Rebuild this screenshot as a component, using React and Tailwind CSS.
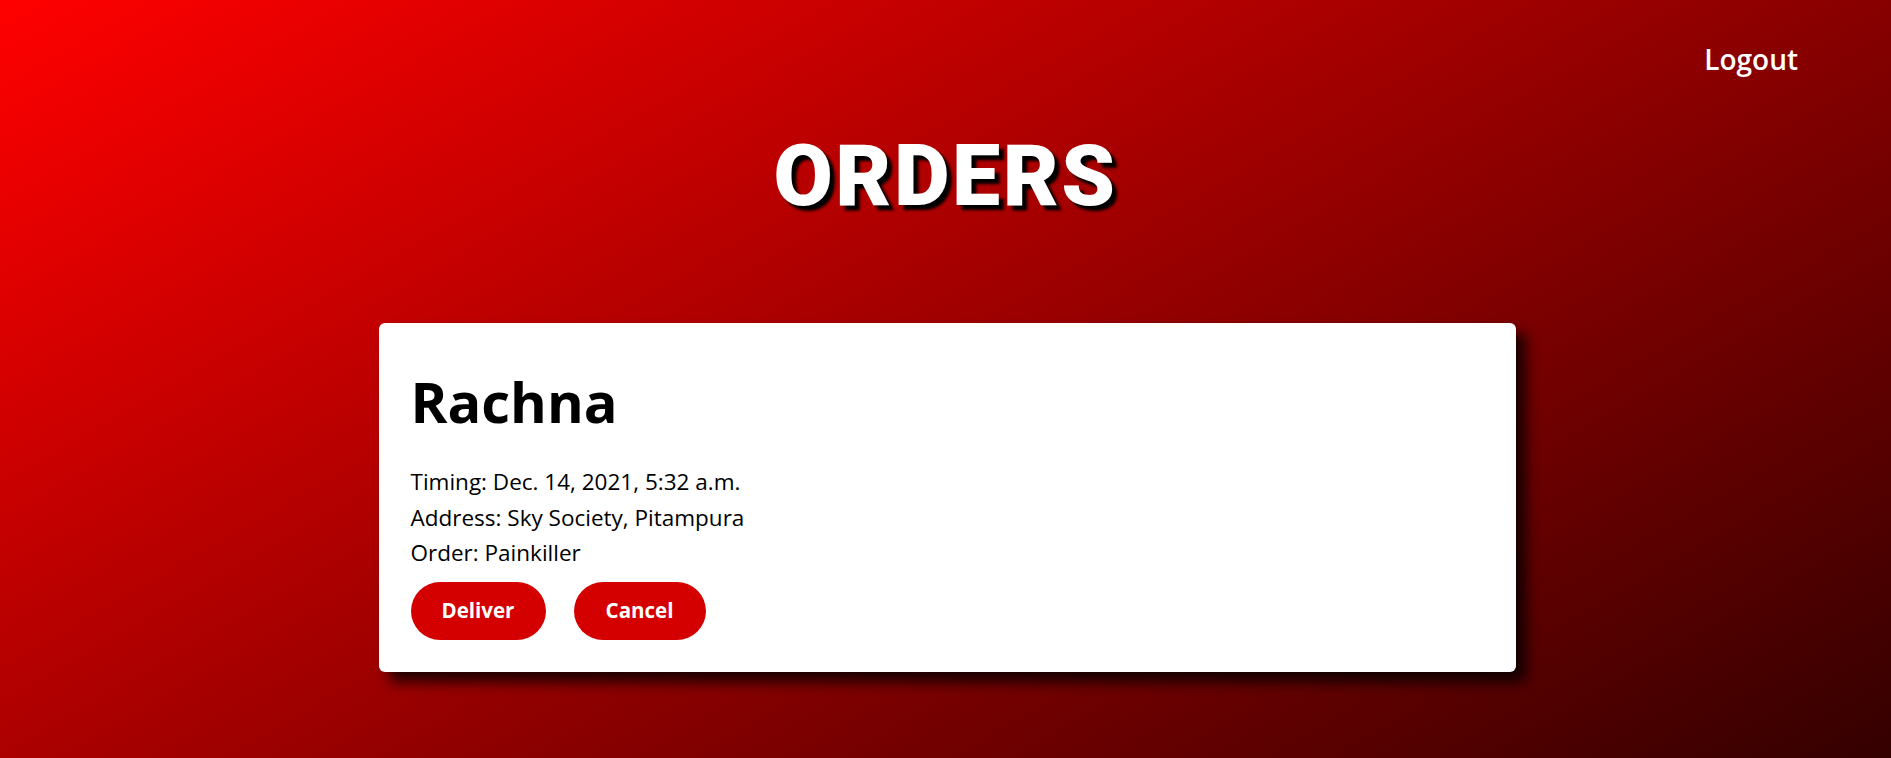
const orders = [
  {
    name: 'Rachna',
    timing: 'Dec. 14, 2021, 5:32 a.m.',
    address: 'Sky Society, Pitampura',
    order: 'Painkiller',
  },
];

const OrderCard = ({ o }) => (
  <div className="bg-white rounded-md shadow-[10px_10px_14px_rgba(0,0,0,0.8)] px-8 pt-[43px] pb-[32px]">
    <h2 className="text-[56px] font-bold leading-[70px] text-black mb-[28px]">{o.name}</h2>
    <div className="text-[22.5px] leading-[35.5px] text-black">
      <p>Timing: {o.timing}</p>
      <p>Address: {o.address}</p>
      <p>Order: {o.order}</p>
    </div>
    <div className="flex gap-7 mt-[11px]">
      <button className="bg-[#d40000] text-white font-bold text-[20.5px] h-[58px] w-[135px] rounded-full">Deliver</button>
      <button className="bg-[#d40000] text-white font-bold text-[20.5px] h-[58px] w-[132px] rounded-full">Cancel</button>
    </div>
  </div>
);

export default function App() {
  return (
    <div className="w-full min-h-[758px] bg-[linear-gradient(150deg,#ff0000,#340000)] font-['Open_Sans',sans-serif]">
      <div className="flex justify-end pr-[93px] pt-[39px]">
        <button className="text-white text-[28px] font-semibold leading-[40px]">Logout</button>
      </div>
      <h1 className="text-center text-white font-black text-[86px] leading-[100px] mt-[47px] tracking-[2.5px] font-['Roboto',sans-serif] [text-shadow:5px_5px_3px_#000]">
        ORDERS
      </h1>
      <div className="flex justify-center pl-[3px] mt-[97px] pb-[89px]">
        <div className="w-[1137px]">
          {orders.map((o, i) => (
            <OrderCard key={i} o={o} />
          ))}
        </div>
      </div>
    </div>
  );
}
